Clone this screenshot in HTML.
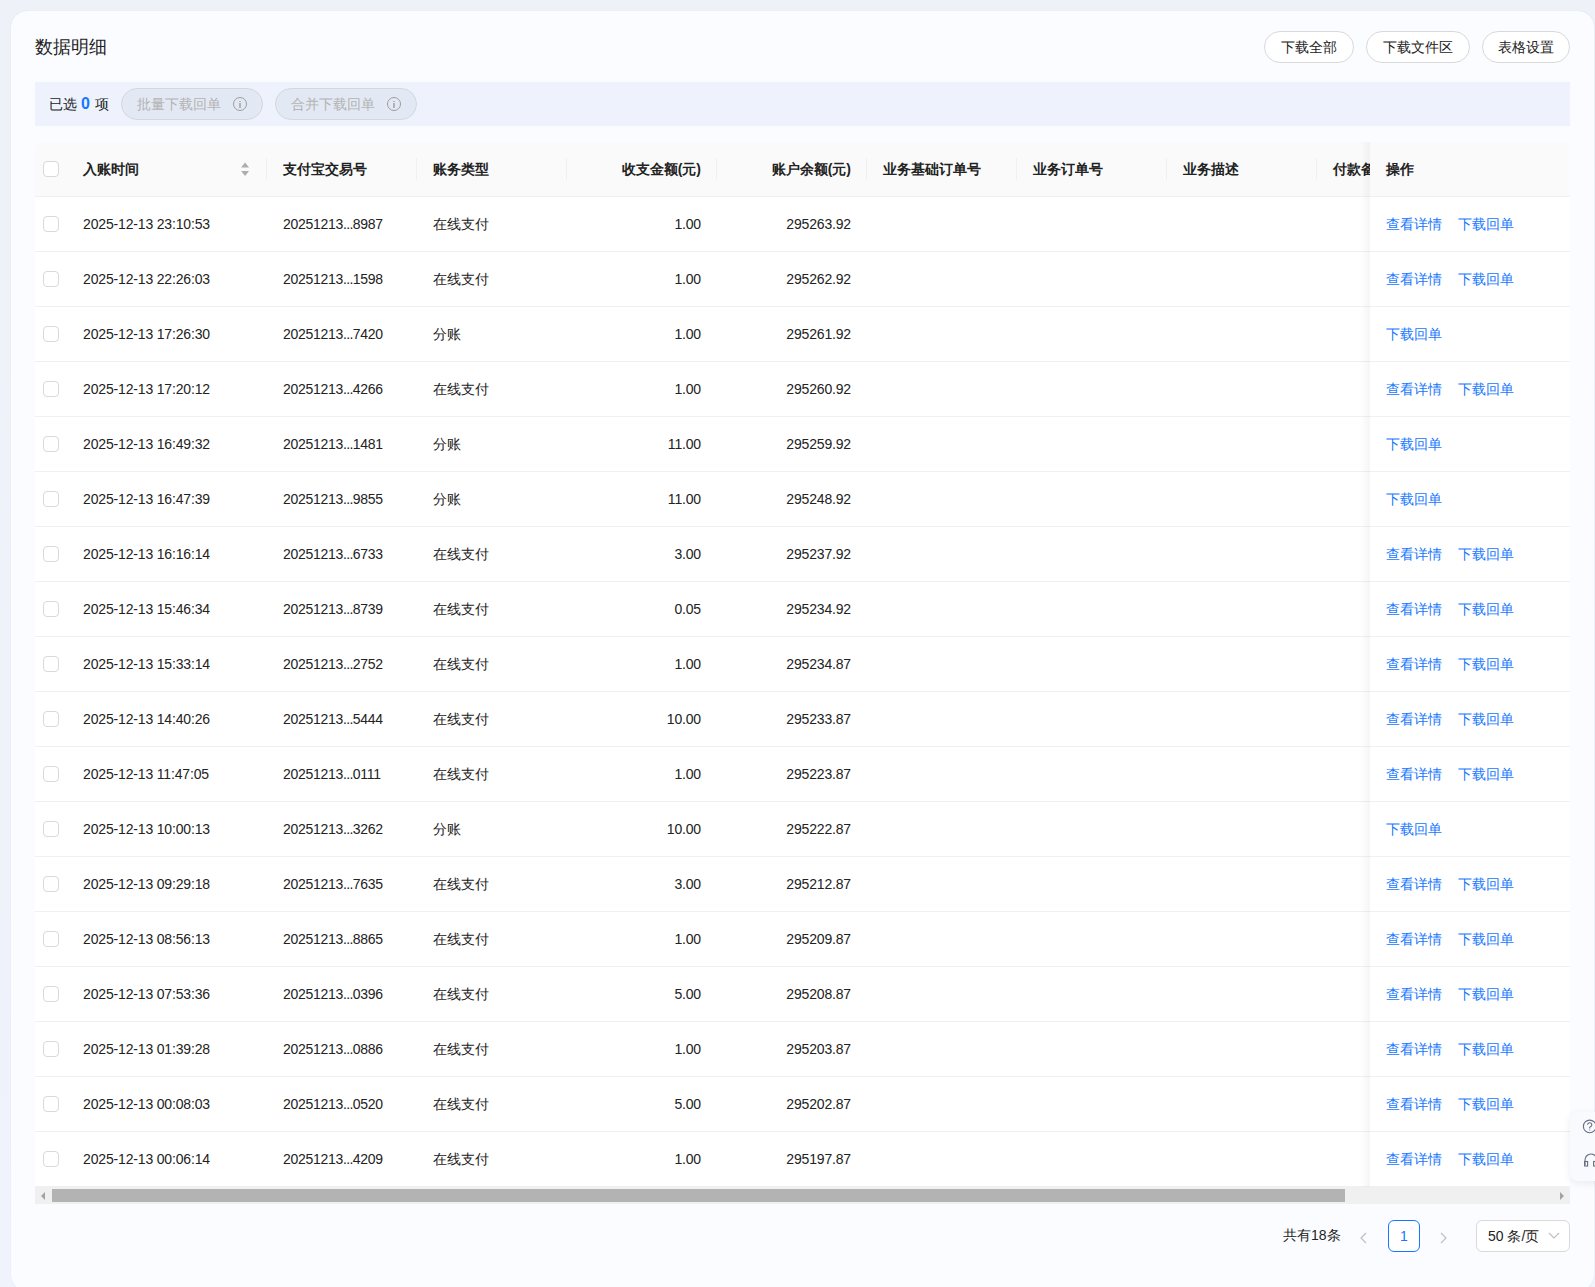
<!DOCTYPE html><html><head><meta charset="utf-8"><style>
*{box-sizing:border-box;margin:0;padding:0}
html,body{width:1595px;height:1287px;overflow:hidden}
body{background:linear-gradient(#eef1f8,#f0f3fb);font-family:"Liberation Sans",sans-serif;color:#222;position:relative}
.card{position:absolute;left:11px;top:11px;width:1583px;height:1280px;background:#fbfcff;border-radius:16px;box-shadow:0 0 1px rgba(120,130,150,0.25)}
.abs{position:absolute}
.title{position:absolute;left:35px;top:35px;font-size:18px;line-height:24px;color:#222}
.btn{position:absolute;top:31px;height:32px;border:1px solid #d9d9d9;border-radius:16px;background:#fff;font-size:14px;line-height:30px;text-align:center;color:#222}
.selbar{position:absolute;left:35px;top:82px;width:1535px;height:44px;background:#edf2fd}
.seltxt{position:absolute;left:49px;top:94px;font-size:14px;line-height:20px;color:#222}
.seltxt b{color:#1677ff;font-weight:bold;padding:0 5px 0 4px;font-size:16px;line-height:20px;vertical-align:top}
.pill{position:absolute;top:88px;height:32px;border:1px solid #d6d7da;border-radius:16px;background:#e3e9f4;font-size:14px;line-height:30px;color:#b3b3b3}
.pill span{position:absolute;left:15px;top:0}
.pill i{position:absolute;top:8px;width:14px;height:14px;border:1.3px solid #9c9c9c;border-radius:50%}
.pill i:before{content:"";position:absolute;left:5.2px;top:2.5px;width:1.5px;height:1.5px;background:#b3b3b3}
.pill i:after{content:"";position:absolute;left:5.2px;top:5px;width:1.5px;height:5px;background:#b3b3b3}
.table{position:absolute;left:35px;top:142px;width:1535px;height:1062px;overflow:hidden;border-radius:8px 0 0 0}
.thead{position:absolute;left:0;top:0;width:1535px;height:55px;background:#fafafa;border-bottom:1px solid #f0f0f0}
.row{position:absolute;left:0;width:1535px;height:55px;background:#fff;border-bottom:1px solid #f0f0f0}
.c{position:absolute;top:0;height:54px;line-height:54px;font-size:14px;white-space:nowrap}
.d{letter-spacing:-0.16px}
.dots{letter-spacing:-0.6px}
.txn{letter-spacing:-0.3px}
.th{font-weight:bold;color:#222}
.r{text-align:right}
.cb{position:absolute;left:8px;top:19px;width:16px;height:16px;border:1px solid #d9d9d9;border-radius:4px;background:#fff}
.div{position:absolute;top:16px;width:1px;height:22px;background:#f0f0f0}
.fixed{position:absolute;left:1335px;top:0;width:200px;height:1045px}
.shadow{position:absolute;left:-10px;top:0;width:10px;height:1045px;background:linear-gradient(to left,rgba(5,5,5,0.04),rgba(5,5,5,0))}
.link{color:#1677ff}
.sb{position:absolute;left:0;top:1045px;width:1535px;height:17px;background:#f0f0f0}
.thumb{position:absolute;left:17px;top:2px;width:1293px;height:13px;background:#b3b3b3}
.foot{position:absolute;font-size:14px;color:#222}
</style></head><body>
<div class="card"></div>
<div class="title">数据明细</div>
<div class="btn" style="left:1264px;width:90px">下载全部</div>
<div class="btn" style="left:1366px;width:104px">下载文件区</div>
<div class="btn" style="left:1482px;width:88px">表格设置</div>
<div class="selbar"></div>
<div class="seltxt">已选<b>0</b>项</div>
<div class="pill" style="left:121px;width:142px"><span>批量下载回单</span><i style="left:111px"></i></div>
<div class="pill" style="left:275px;width:142px"><span>合并下载回单</span><i style="left:111px"></i></div>
<div class="table">
<div class="thead"><div class="cb"></div>
<div class="c th" style="left:48px">入账时间</div>
<div class="div" style="left:231px"></div>
<div class="c th" style="left:248px">支付宝交易号</div>
<div class="div" style="left:381px"></div>
<div class="c th" style="left:398px">账务类型</div>
<div class="div" style="left:531px"></div>
<div class="c th" style="left:532px;width:150px;padding-right:16px;text-align:right">收支金额(元)</div>
<div class="div" style="left:681px"></div>
<div class="c th" style="left:682px;width:150px;padding-right:16px;text-align:right">账户余额(元)</div>
<div class="div" style="left:831px"></div>
<div class="c th" style="left:848px">业务基础订单号</div>
<div class="div" style="left:981px"></div>
<div class="c th" style="left:998px">业务订单号</div>
<div class="div" style="left:1131px"></div>
<div class="c th" style="left:1148px">业务描述</div>
<div class="div" style="left:1281px"></div>
<div class="c th" style="left:1298px">付款备注</div>
<svg class="abs" style="left:206px;top:20px" width="10" height="16" viewBox="0 0 10 16"><path d="M0.1 5.6 L4.05 0.6 L8 5.6Z" fill="#adadad"/><path d="M0.1 8.9 L4.05 14 L8 8.9Z" fill="#adadad"/></svg>
</div>
<div class="row" style="top:55px"><div class="cb"></div>
<div class="c d" style="left:48px">2025-12-13 23:10:53</div>
<div class="c txn" style="left:248px">20251213<span class="dots">...</span>8987</div>
<div class="c " style="left:398px">在线支付</div>
<div class="c d" style="left:532px;width:150px;padding-right:16px;text-align:right">1.00</div>
<div class="c d" style="left:682px;width:150px;padding-right:16px;text-align:right">295263.92</div>
</div>
<div class="row" style="top:110px"><div class="cb"></div>
<div class="c d" style="left:48px">2025-12-13 22:26:03</div>
<div class="c txn" style="left:248px">20251213<span class="dots">...</span>1598</div>
<div class="c " style="left:398px">在线支付</div>
<div class="c d" style="left:532px;width:150px;padding-right:16px;text-align:right">1.00</div>
<div class="c d" style="left:682px;width:150px;padding-right:16px;text-align:right">295262.92</div>
</div>
<div class="row" style="top:165px"><div class="cb"></div>
<div class="c d" style="left:48px">2025-12-13 17:26:30</div>
<div class="c txn" style="left:248px">20251213<span class="dots">...</span>7420</div>
<div class="c " style="left:398px">分账</div>
<div class="c d" style="left:532px;width:150px;padding-right:16px;text-align:right">1.00</div>
<div class="c d" style="left:682px;width:150px;padding-right:16px;text-align:right">295261.92</div>
</div>
<div class="row" style="top:220px"><div class="cb"></div>
<div class="c d" style="left:48px">2025-12-13 17:20:12</div>
<div class="c txn" style="left:248px">20251213<span class="dots">...</span>4266</div>
<div class="c " style="left:398px">在线支付</div>
<div class="c d" style="left:532px;width:150px;padding-right:16px;text-align:right">1.00</div>
<div class="c d" style="left:682px;width:150px;padding-right:16px;text-align:right">295260.92</div>
</div>
<div class="row" style="top:275px"><div class="cb"></div>
<div class="c d" style="left:48px">2025-12-13 16:49:32</div>
<div class="c txn" style="left:248px">20251213<span class="dots">...</span>1481</div>
<div class="c " style="left:398px">分账</div>
<div class="c d" style="left:532px;width:150px;padding-right:16px;text-align:right">11.00</div>
<div class="c d" style="left:682px;width:150px;padding-right:16px;text-align:right">295259.92</div>
</div>
<div class="row" style="top:330px"><div class="cb"></div>
<div class="c d" style="left:48px">2025-12-13 16:47:39</div>
<div class="c txn" style="left:248px">20251213<span class="dots">...</span>9855</div>
<div class="c " style="left:398px">分账</div>
<div class="c d" style="left:532px;width:150px;padding-right:16px;text-align:right">11.00</div>
<div class="c d" style="left:682px;width:150px;padding-right:16px;text-align:right">295248.92</div>
</div>
<div class="row" style="top:385px"><div class="cb"></div>
<div class="c d" style="left:48px">2025-12-13 16:16:14</div>
<div class="c txn" style="left:248px">20251213<span class="dots">...</span>6733</div>
<div class="c " style="left:398px">在线支付</div>
<div class="c d" style="left:532px;width:150px;padding-right:16px;text-align:right">3.00</div>
<div class="c d" style="left:682px;width:150px;padding-right:16px;text-align:right">295237.92</div>
</div>
<div class="row" style="top:440px"><div class="cb"></div>
<div class="c d" style="left:48px">2025-12-13 15:46:34</div>
<div class="c txn" style="left:248px">20251213<span class="dots">...</span>8739</div>
<div class="c " style="left:398px">在线支付</div>
<div class="c d" style="left:532px;width:150px;padding-right:16px;text-align:right">0.05</div>
<div class="c d" style="left:682px;width:150px;padding-right:16px;text-align:right">295234.92</div>
</div>
<div class="row" style="top:495px"><div class="cb"></div>
<div class="c d" style="left:48px">2025-12-13 15:33:14</div>
<div class="c txn" style="left:248px">20251213<span class="dots">...</span>2752</div>
<div class="c " style="left:398px">在线支付</div>
<div class="c d" style="left:532px;width:150px;padding-right:16px;text-align:right">1.00</div>
<div class="c d" style="left:682px;width:150px;padding-right:16px;text-align:right">295234.87</div>
</div>
<div class="row" style="top:550px"><div class="cb"></div>
<div class="c d" style="left:48px">2025-12-13 14:40:26</div>
<div class="c txn" style="left:248px">20251213<span class="dots">...</span>5444</div>
<div class="c " style="left:398px">在线支付</div>
<div class="c d" style="left:532px;width:150px;padding-right:16px;text-align:right">10.00</div>
<div class="c d" style="left:682px;width:150px;padding-right:16px;text-align:right">295233.87</div>
</div>
<div class="row" style="top:605px"><div class="cb"></div>
<div class="c d" style="left:48px">2025-12-13 11:47:05</div>
<div class="c txn" style="left:248px">20251213<span class="dots">...</span>0111</div>
<div class="c " style="left:398px">在线支付</div>
<div class="c d" style="left:532px;width:150px;padding-right:16px;text-align:right">1.00</div>
<div class="c d" style="left:682px;width:150px;padding-right:16px;text-align:right">295223.87</div>
</div>
<div class="row" style="top:660px"><div class="cb"></div>
<div class="c d" style="left:48px">2025-12-13 10:00:13</div>
<div class="c txn" style="left:248px">20251213<span class="dots">...</span>3262</div>
<div class="c " style="left:398px">分账</div>
<div class="c d" style="left:532px;width:150px;padding-right:16px;text-align:right">10.00</div>
<div class="c d" style="left:682px;width:150px;padding-right:16px;text-align:right">295222.87</div>
</div>
<div class="row" style="top:715px"><div class="cb"></div>
<div class="c d" style="left:48px">2025-12-13 09:29:18</div>
<div class="c txn" style="left:248px">20251213<span class="dots">...</span>7635</div>
<div class="c " style="left:398px">在线支付</div>
<div class="c d" style="left:532px;width:150px;padding-right:16px;text-align:right">3.00</div>
<div class="c d" style="left:682px;width:150px;padding-right:16px;text-align:right">295212.87</div>
</div>
<div class="row" style="top:770px"><div class="cb"></div>
<div class="c d" style="left:48px">2025-12-13 08:56:13</div>
<div class="c txn" style="left:248px">20251213<span class="dots">...</span>8865</div>
<div class="c " style="left:398px">在线支付</div>
<div class="c d" style="left:532px;width:150px;padding-right:16px;text-align:right">1.00</div>
<div class="c d" style="left:682px;width:150px;padding-right:16px;text-align:right">295209.87</div>
</div>
<div class="row" style="top:825px"><div class="cb"></div>
<div class="c d" style="left:48px">2025-12-13 07:53:36</div>
<div class="c txn" style="left:248px">20251213<span class="dots">...</span>0396</div>
<div class="c " style="left:398px">在线支付</div>
<div class="c d" style="left:532px;width:150px;padding-right:16px;text-align:right">5.00</div>
<div class="c d" style="left:682px;width:150px;padding-right:16px;text-align:right">295208.87</div>
</div>
<div class="row" style="top:880px"><div class="cb"></div>
<div class="c d" style="left:48px">2025-12-13 01:39:28</div>
<div class="c txn" style="left:248px">20251213<span class="dots">...</span>0886</div>
<div class="c " style="left:398px">在线支付</div>
<div class="c d" style="left:532px;width:150px;padding-right:16px;text-align:right">1.00</div>
<div class="c d" style="left:682px;width:150px;padding-right:16px;text-align:right">295203.87</div>
</div>
<div class="row" style="top:935px"><div class="cb"></div>
<div class="c d" style="left:48px">2025-12-13 00:08:03</div>
<div class="c txn" style="left:248px">20251213<span class="dots">...</span>0520</div>
<div class="c " style="left:398px">在线支付</div>
<div class="c d" style="left:532px;width:150px;padding-right:16px;text-align:right">5.00</div>
<div class="c d" style="left:682px;width:150px;padding-right:16px;text-align:right">295202.87</div>
</div>
<div class="row" style="top:990px"><div class="cb"></div>
<div class="c d" style="left:48px">2025-12-13 00:06:14</div>
<div class="c txn" style="left:248px">20251213<span class="dots">...</span>4209</div>
<div class="c " style="left:398px">在线支付</div>
<div class="c d" style="left:532px;width:150px;padding-right:16px;text-align:right">1.00</div>
<div class="c d" style="left:682px;width:150px;padding-right:16px;text-align:right">295197.87</div>
</div>
<div class="fixed"><div class="shadow"></div>
<div class="thead" style="width:200px;left:0"><div class="c th" style="left:16px">操作</div></div>
<div class="row" style="top:55px;width:200px"><div class="c link" style="left:16px">查看详情</div><div class="c link" style="left:88px">下载回单</div></div>
<div class="row" style="top:110px;width:200px"><div class="c link" style="left:16px">查看详情</div><div class="c link" style="left:88px">下载回单</div></div>
<div class="row" style="top:165px;width:200px"><div class="c link" style="left:16px">下载回单</div></div>
<div class="row" style="top:220px;width:200px"><div class="c link" style="left:16px">查看详情</div><div class="c link" style="left:88px">下载回单</div></div>
<div class="row" style="top:275px;width:200px"><div class="c link" style="left:16px">下载回单</div></div>
<div class="row" style="top:330px;width:200px"><div class="c link" style="left:16px">下载回单</div></div>
<div class="row" style="top:385px;width:200px"><div class="c link" style="left:16px">查看详情</div><div class="c link" style="left:88px">下载回单</div></div>
<div class="row" style="top:440px;width:200px"><div class="c link" style="left:16px">查看详情</div><div class="c link" style="left:88px">下载回单</div></div>
<div class="row" style="top:495px;width:200px"><div class="c link" style="left:16px">查看详情</div><div class="c link" style="left:88px">下载回单</div></div>
<div class="row" style="top:550px;width:200px"><div class="c link" style="left:16px">查看详情</div><div class="c link" style="left:88px">下载回单</div></div>
<div class="row" style="top:605px;width:200px"><div class="c link" style="left:16px">查看详情</div><div class="c link" style="left:88px">下载回单</div></div>
<div class="row" style="top:660px;width:200px"><div class="c link" style="left:16px">下载回单</div></div>
<div class="row" style="top:715px;width:200px"><div class="c link" style="left:16px">查看详情</div><div class="c link" style="left:88px">下载回单</div></div>
<div class="row" style="top:770px;width:200px"><div class="c link" style="left:16px">查看详情</div><div class="c link" style="left:88px">下载回单</div></div>
<div class="row" style="top:825px;width:200px"><div class="c link" style="left:16px">查看详情</div><div class="c link" style="left:88px">下载回单</div></div>
<div class="row" style="top:880px;width:200px"><div class="c link" style="left:16px">查看详情</div><div class="c link" style="left:88px">下载回单</div></div>
<div class="row" style="top:935px;width:200px"><div class="c link" style="left:16px">查看详情</div><div class="c link" style="left:88px">下载回单</div></div>
<div class="row" style="top:990px;width:200px"><div class="c link" style="left:16px">查看详情</div><div class="c link" style="left:88px">下载回单</div></div>
</div>
<div class="sb"><svg class="abs" style="left:5px;top:5px" width="6" height="8"><path d="M5 0 L1 4 L5 8Z" fill="#a3a3a3"/></svg><div class="thumb"></div><svg class="abs" style="left:1524px;top:5px" width="6" height="8"><path d="M1 0 L5 4 L1 8Z" fill="#a3a3a3"/></svg></div>
</div>
<div class="foot" style="left:1283px;top:1225px;line-height:20px">共有18条</div>
<svg class="abs" style="left:1358px;top:1231px" width="12" height="14"><path d="M8 2 L3 7 L8 12" fill="none" stroke="#bfbfbf" stroke-width="1.2"/></svg>
<div class="abs" style="left:1388px;top:1220px;width:32px;height:32px;border:1px solid #1677ff;border-radius:6px;background:#fff;color:#1677ff;font-size:14px;line-height:30px;text-align:center">1</div>
<svg class="abs" style="left:1438px;top:1231px" width="12" height="14"><path d="M3 2 L8 7 L3 12" fill="none" stroke="#bfbfbf" stroke-width="1.2"/></svg>
<div class="abs" style="left:1476px;top:1220px;width:94px;height:32px;border:1px solid #d9d9d9;border-radius:6px;background:#fff;font-size:14px;line-height:30px;color:#222"><span style="position:absolute;left:11px">50 条/页</span><svg class="abs" style="left:71px;top:10px" width="12" height="10"><path d="M1 2 L6 7 L11 2" fill="none" stroke="#bfbfbf" stroke-width="1.2"/></svg></div>
<div class="abs" style="left:1570px;top:1112px;width:40px;height:69px;background:#f9fafd;border-radius:8px;box-shadow:0 2px 8px rgba(0,0,0,0.08)">
<svg class="abs" style="left:11px;top:7px" width="20" height="20"><circle cx="8.7" cy="7.4" r="6.3" fill="none" stroke="#686d82" stroke-width="1.1"/><path d="M6.6 5.8 A2.1 2.1 0 1 1 9.3 7.8 L8.7 8.4 V9.4" fill="none" stroke="#686d82" stroke-width="1.1"/><circle cx="8.7" cy="11" r="0.6" fill="#686d82"/></svg>
<svg class="abs" style="left:14px;top:41px" width="20" height="16"><path d="M1 12 V7 A6 6 0 0 1 13 7 V12" fill="none" stroke="#686d82" stroke-width="1.1"/><rect x="0.6" y="8.5" width="3" height="4.5" fill="none" stroke="#686d82" stroke-width="1.1"/><rect x="9.6" y="8.5" width="3" height="4.5" fill="none" stroke="#686d82" stroke-width="1.1"/></svg>
</div>
</body></html>
